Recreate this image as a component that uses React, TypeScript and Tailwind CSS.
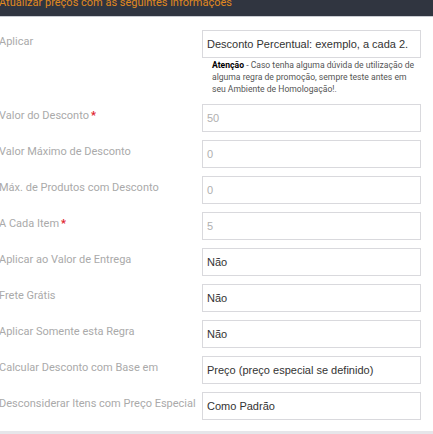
import React from "react";

const rows: { label: string; value: string; required?: boolean; muted?: boolean }[] = [
  { label: "Valor do Desconto", value: "50", required: true, muted: true },
  { label: "Valor Máximo de Desconto", value: "0", muted: true },
  { label: "Máx. de Produtos com Desconto", value: "0", muted: true },
  { label: "A Cada Item", value: "5", required: true, muted: true },
  { label: "Aplicar ao Valor de Entrega", value: "Não" },
  { label: "Frete Grátis", value: "Não" },
  { label: "Aplicar Somente esta Regra", value: "Não" },
  { label: "Calcular Desconto com Base em", value: "Preço (preço especial se definido)" },
  { label: "Desconsiderar Itens com Preço Especial", value: "Como Padrão" },
];

function Field({ value, muted }: { value: string; muted?: boolean }) {
  return (
    <div
      className={
        "w-[219px] h-[28px] border border-[#d9d9dd] bg-white pl-[4px] flex items-center overflow-hidden whitespace-nowrap text-[11px] font-['Liberation_Sans',Arial,sans-serif] " +
        (muted ? "text-[#b0b0b0]" : "text-[#333]")
      }
    >
      {value}
    </div>
  );
}

export default function App() {
  return (
    <div className="w-[433px] h-[434px] bg-white overflow-hidden relative font-['Roboto',sans-serif]">
      <div className="h-[17px] bg-[#303540] border-b border-[#c9ccd2] overflow-hidden">
        <div className="text-[11px] leading-[13px] text-[#e0891f] -mt-[4px] -ml-[1px] whitespace-nowrap">
          Atualizar preços com as seguintes informações
        </div>
      </div>

      <div className="pt-[13px] flex flex-col">
        <div className="flex">
          <div className="w-[203px] pt-[5px] text-[11px] leading-[14px] text-[#aaaaaa] -ml-[1px]">Aplicar</div>
          <div className="flex flex-col">
            <Field value="Desconto Percentual: exemplo, a cada 2." />
            <div className="w-[219px] pl-[10px] pr-[2px] pt-[1px] text-[8.6px] leading-[12px] text-[#555]">
              <span className="font-bold text-black">Atenção</span> - Caso tenha alguma dúvida de utilização de
              alguma regra de promoção, sempre teste antes em seu Ambiente de Homologação!.
            </div>
          </div>
        </div>

        <div className="mt-[9px] flex flex-col gap-[8px]">
          {rows.map((r) => (
            <div key={r.label} className="flex">
              <div className="w-[203px] pt-[5px] text-[11px] leading-[14px] text-[#aaaaaa] -ml-[1px] whitespace-nowrap">
                {r.label}
                {r.required && <span className="text-[#e0202e] ml-[2px] font-bold">*</span>}
              </div>
              <Field value={r.value} muted={r.muted} />
            </div>
          ))}
        </div>
      </div>

      <div className="absolute left-0 right-0 bottom-0 h-[3px] bg-[#e6e6ea]" />
    </div>
  );
}
